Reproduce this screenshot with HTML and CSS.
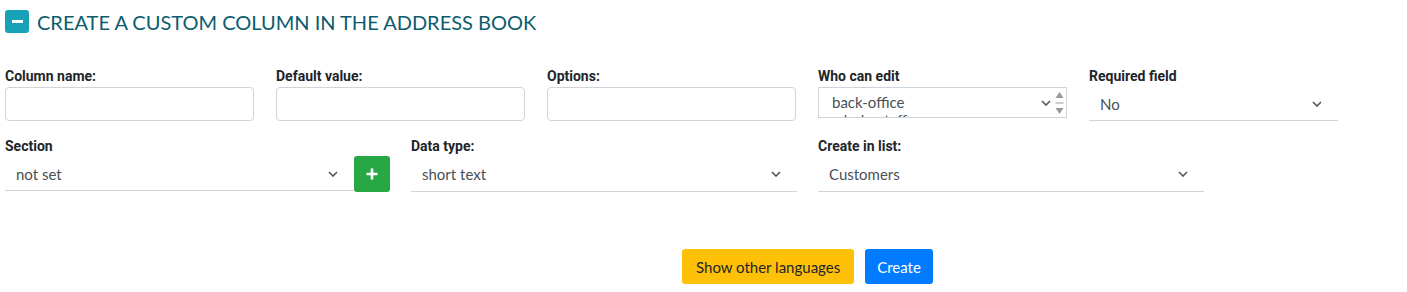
FILE: index.html
```html
<!DOCTYPE html>
<html lang="en">
<head>
    <meta charset="UTF-8">
    <meta name="viewport" content="width=device-width, initial-scale=1.0">
    <title>Custom column</title>
    <link rel="stylesheet" href="styles.css">
</head>
<body>
    <div class="panel">
        <h2 class="panel-title">
            <span class="toggle"><span class="minus"></span></span>
            CREATE A CUSTOM COLUMN IN THE ADDRESS BOOK
        </h2>

        <div class="form-row first">
            <div class="field">
                <label>Column name:</label>
                <div class="input"></div>
            </div>
            <div class="field">
                <label>Default value:</label>
                <div class="input"></div>
            </div>
            <div class="field">
                <label>Options:</label>
                <div class="input"></div>
            </div>
            <div class="field">
                <label>Who can edit</label>
                <div class="multi">
                    <div class="multi-options">
                        <div class="opt">back-office</div>
                        <div class="opt">whole-staff</div>
                    </div>
                    <svg class="chev" width="10" height="6" viewBox="0 0 10 6"><path d="M1 1l4 4 4-4" fill="none" stroke="#555" stroke-width="1.6"/></svg>
                    <div class="spin">
                        <svg width="9" height="26" viewBox="0 0 9 26">
                            <path d="M4.5 2L8.5 8H0.5z" fill="#999"/>
                            <rect x="0.5" y="12.5" width="8" height="1" fill="#999"/>
                            <path d="M0.5 18H8.5L4.5 24z" fill="#999"/>
                        </svg>
                    </div>
                </div>
            </div>
            <div class="field">
                <label>Required field</label>
                <div class="select">
                    <span>No</span>
                    <svg class="chev" width="10" height="6" viewBox="0 0 10 6"><path d="M1 1l4 4 4-4" fill="none" stroke="#555" stroke-width="1.6"/></svg>
                </div>
            </div>
        </div>

        <div class="form-row second">
            <div class="field section">
                <label>Section</label>
                <div class="with-add">
                    <div class="select">
                        <span>not set</span>
                        <svg class="chev" width="10" height="6" viewBox="0 0 10 6"><path d="M1 1l4 4 4-4" fill="none" stroke="#555" stroke-width="1.6"/></svg>
                    </div>
                    <button class="btn-add">
                        <svg width="12" height="12" viewBox="0 0 12 12"><path d="M6 0.5v11M0.5 6h11" stroke="#fff" stroke-width="2.6"/></svg>
                    </button>
                </div>
            </div>
            <div class="field wide">
                <label>Data type:</label>
                <div class="select">
                    <span>short text</span>
                    <svg class="chev" width="10" height="6" viewBox="0 0 10 6"><path d="M1 1l4 4 4-4" fill="none" stroke="#555" stroke-width="1.6"/></svg>
                </div>
            </div>
            <div class="field wide">
                <label>Create in list:</label>
                <div class="select">
                    <span>Customers</span>
                    <svg class="chev" width="10" height="6" viewBox="0 0 10 6"><path d="M1 1l4 4 4-4" fill="none" stroke="#555" stroke-width="1.6"/></svg>
                </div>
            </div>
        </div>

        <div class="actions">
            <button class="btn btn-warning">Show other languages</button>
            <button class="btn btn-primary">Create</button>
        </div>
    </div>
</body>
</html>
```

FILE: styles.css
```css
body {
    margin: 0;
    padding: 0;
    background-color: #fff;
    font-family: "Lato", "Open Sans", sans-serif;
    color: #212529;
}

.panel {
    padding: 10px 5px 0 5px;
}

.panel-title {
    display: flex;
    align-items: center;
    gap: 8px;
    margin: 0;
    height: 23px;
    font-size: 20px;
    font-weight: 400;
    color: #0b5c6d;
}

.toggle {
    width: 24px;
    height: 23px;
    border-radius: 3px;
    background-color: #17a2b8;
    display: flex;
    align-items: center;
    justify-content: center;
}

.minus {
    width: 11px;
    height: 3px;
    background-color: #fff;
}

.form-row {
    display: flex;
    gap: 22px;
}

.form-row.first {
    margin-top: 35px;
}

.form-row.second {
    margin-top: 17px;
    gap: 21px;
}

.field {
    width: 249px;
    display: flex;
    flex-direction: column;
}

.field.wide {
    width: 386px;
}

.field.section {
    width: 385px;
}

label {
    font-family: "Roboto", sans-serif;
    font-weight: 700;
    font-size: 14px;
    line-height: 17px;
    color: #212529;
    margin-bottom: 2px;
}

.input {
    height: 32px;
    border: 1px solid #ced4da;
    border-radius: 4px;
}

.select {
    height: 33px;
    border-bottom: 1px solid #ced4da;
    display: flex;
    align-items: center;
    justify-content: space-between;
    padding: 0 16px 0 11px;
    font-size: 15px;
    color: #495057;
    flex: 1;
}

.with-add {
    display: flex;
    align-items: flex-start;
}

.btn-add {
    width: 36px;
    height: 36px;
    margin-top: -1px;
    border: none;
    border-radius: 3px;
    background-color: #28a745;
    display: flex;
    align-items: center;
    justify-content: center;
    padding: 0;
}

.multi {
    position: relative;
    height: 29px;
    border: 1px solid #ced4da;
    overflow: hidden;
    font-size: 15px;
    color: #495057;
}

.multi-options {
    padding: 5px 0 0 13px;
}

.opt {
    line-height: 18px;
}

.multi .chev {
    position: absolute;
    right: 15px;
    top: 12px;
}

.spin {
    position: absolute;
    right: 0;
    top: 0;
    width: 13px;
    height: 29px;
    display: flex;
    align-items: center;
    justify-content: center;
    background-color: #fff;
}

.actions {
    display: flex;
    gap: 11px;
    margin-top: 57px;
    padding-left: 677px;
}

.btn {
    height: 35px;
    padding: 0 12px;
    border: none;
    border-radius: 3px;
    font-family: "Lato", sans-serif;
    font-size: 15px;
}

.btn-warning {
    padding: 0 14px;
    background-color: #ffc107;
    color: #212529;
}

.btn-primary {
    background-color: #007bff;
    color: #fff;
}
```
